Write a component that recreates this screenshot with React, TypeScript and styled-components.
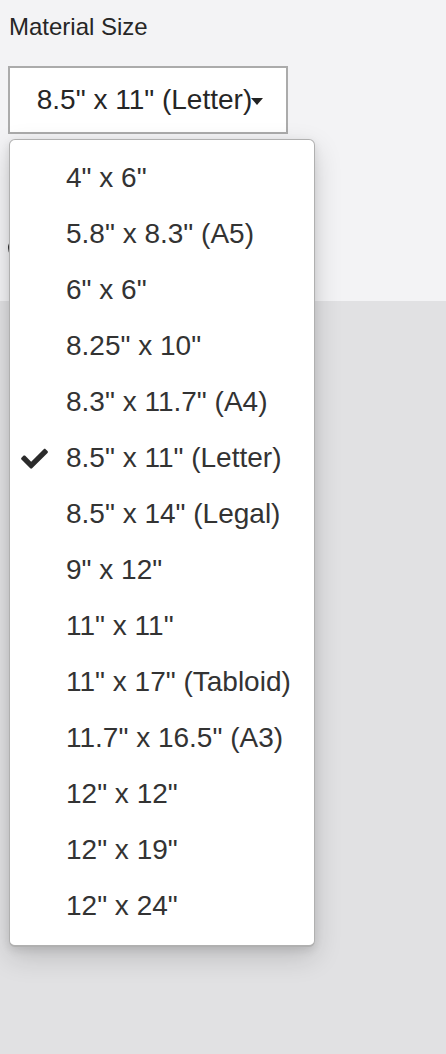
import React from "react";
import styled, { createGlobalStyle } from "styled-components";

const Global = createGlobalStyle`
  html, body { margin: 0; padding: 0; }
  body {
    background: #e1e1e3;
    font-family: "Liberation Sans", Arial, Helvetica, sans-serif;
    -webkit-font-smoothing: antialiased;
  }
`;

const Page = styled.div`
  min-height: 1054px;
  display: flex;
  flex-direction: column;
  background: #e1e1e3;
`;

const TopPanel = styled.div`
  height: 301px;
  box-sizing: border-box;
  background: #f3f3f5;
  padding: 13px 8px 0 8px;
  display: flex;
  flex-direction: column;
  align-items: flex-start;
`;

const Label = styled.div`
  font-size: 24px;
  line-height: 28px;
  color: #262626;
  padding-left: 1px;
`;

const Field = styled.div`
  position: relative;
  margin-top: 25px;
  width: 280px;
`;

const SelectButton = styled.div`
  box-sizing: border-box;
  width: 280px;
  height: 68px;
  border: 2px solid #ababab;
  background: #fff;
  display: flex;
  align-items: center;
  justify-content: center;
  font-size: 28px;
  color: #262626;
  padding-left: 4px;
`;

const Caret = styled.span`
  display: inline-block;
  width: 0;
  height: 0;
  border-left: 6.5px solid transparent;
  border-right: 6.5px solid transparent;
  border-top: 7px solid #222;
  margin-top: 2px;
  margin-left: -1px;
`;

const Radio = styled.span`
  display: block;
  box-sizing: border-box;
  margin-top: 102px;
  width: 24px;
  height: 24px;
  border: 2px solid #333;
  border-radius: 50%;
  background: #fff;
`;

const Menu = styled.ul`
  position: absolute;
  top: 73px;
  left: 1px;
  width: 306px;
  box-sizing: border-box;
  margin: 0;
  padding: 10px 0 11px 0;
  list-style: none;
  background: #fff;
  border: 1px solid #b0b0b0;
  border-bottom-width: 2px;
  border-radius: 6px;
  box-shadow: 0 10px 28px rgba(0, 0, 0, 0.16), 0 3px 8px rgba(0, 0, 0, 0.1);
  z-index: 10;
`;

const Item = styled.li`
  height: 56px;
  display: flex;
  align-items: center;
  position: relative;
  padding-left: 56px;
  font-size: 28px;
  color: #333;
  white-space: nowrap;
`;

const Check = styled.svg`
  position: absolute;
  left: 11px;
  top: 50%;
  transform: translateY(-50%);
  width: 27px;
  height: 22px;
  fill: #2b2b2b;
`;

const Lower = styled.div`
  flex: 1;
  background: #e1e1e3;
`;

const sizes = [
  '4" x 6"',
  '5.8" x 8.3" (A5)',
  '6" x 6"',
  '8.25" x 10"',
  '8.3" x 11.7" (A4)',
  '8.5" x 11" (Letter)',
  '8.5" x 14" (Legal)',
  '9" x 12"',
  '11" x 11"',
  '11" x 17" (Tabloid)',
  '11.7" x 16.5" (A3)',
  '12" x 12"',
  '12" x 19"',
  '12" x 24"',
];

const selected = '8.5" x 11" (Letter)';

export default function App() {
  return (
    <>
      <Global />
      <Page>
        <TopPanel>
          <Label>Material Size</Label>
          <Field>
            <SelectButton>
              <span>{selected}</span>
              <Caret />
            </SelectButton>
            <Menu>
              {sizes.map((s) => (
                <Item key={s}>
                  {s === selected && (
                    <Check viewBox="0 0 512 420">
                      <path d="M173.9 407.4l-166.4-166.4c-10-10-10-26.2 0-36.2l36.2-36.2c10-10 26.2-10 36.2 0L192 280.7 432.1 40.6c10-10 26.2-10 36.2 0l36.2 36.2c10 10 10 26.2 0 36.2l-294.4 294.4c-10 10-26.2 10-36.2 0z" />
                    </Check>
                  )}
                  {s}
                </Item>
              ))}
            </Menu>
          </Field>
          <Radio />
        </TopPanel>
        <Lower />
      </Page>
    </>
  );
}
